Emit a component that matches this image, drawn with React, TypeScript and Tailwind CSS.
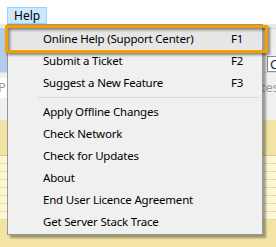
import React from "react";

const font = { fontFamily: '"Noto Sans", "Segoe UI", sans-serif' };

type Item = { label: string; key?: string };

const top: Item[] = [
  { label: "Online Help (Support Center)", key: "F1" },
  { label: "Submit a Ticket", key: "F2" },
  { label: "Suggest a New Feature", key: "F3" },
];

const bottom: Item[] = [
  { label: "Apply Offline Changes" },
  { label: "Check Network" },
  { label: "Check for Updates" },
  { label: "About" },
  { label: "End User Licence Agreement" },
  { label: "Get Server Stack Trace" },
];

function MenuRow({ item, active }: { item: Item; active?: boolean }) {
  return (
    <div
      className={
        "flex items-center h-[22px] mx-[1px] pl-[34px] pt-[1px] text-[11.5px] tracking-[-0.2px] text-black " +
        (active ? "bg-[#e6e6e6]" : "")
      }
    >
      <span className="w-[188px] whitespace-nowrap">{item.label}</span>
      <span className="whitespace-nowrap">{item.key}</span>
    </div>
  );
}

function Backdrop() {
  return (
    <div className="flex flex-col h-full">
      <div className="h-[24px] bg-white flex items-start pl-[7px] pt-[7px]">
        <div className="h-[17px] px-[6px] flex items-center bg-[#cce8ff] border border-[#99d1ff] text-[12px] text-black">
          Help
        </div>
      </div>
      <div className="h-[4px] bg-[#e9e9e9]" />
      <div className="h-[44px] flex">
        <div className="w-[8px] bg-[#b3cdee]" />
        <div className="flex-1 bg-[#f0f0f0] flex justify-end items-start pt-[27px] border-t border-[#d5d5d5]">
          <div className="w-[9px] h-[16px] bg-white border-l border-t border-b border-[#8a8a8a] pl-[2px] text-[13px] leading-[15px] text-[#1c2a4a] overflow-hidden">
            C
          </div>
        </div>
      </div>
      <div className="h-[48px] bg-[#f0f0f0] border-t border-[#dcdcdc] flex justify-between items-start pt-[5px] text-[13px] text-[#9a9a9a]">
        <span className="-ml-[2px] bg-white pr-[1px]">P</span>
        <span className="-mr-[3px]">tes</span>
      </div>
      <div className="flex-1 bg-[#f3e4a5] flex flex-col">
        <div className="h-[36px] border-b border-[#e2c988]" />
        {[0, 1, 2, 3, 4, 5, 6, 7].map((i) => (
          <div key={i} className="h-[8px] bg-[#fcf8d6] border-b border-[#e8d9a2]" />
        ))}
      </div>
    </div>
  );
}

export default function App() {
  return (
    <div className="relative w-[276px] h-[247px] overflow-hidden bg-white" style={font}>
      <Backdrop />
      <div className="absolute left-[7px] top-[24px] w-[256px] h-[211px] bg-[#f0f0f0] border border-[#979797] py-[2px] shadow-[3px_3px_2px_rgba(0,0,0,0.35)]">
        {top.map((item, i) => (
          <MenuRow key={item.label} item={item} active={i === 0} />
        ))}
        <div className="h-[7px] flex items-center pl-[30px] pr-[3px] pt-[1px]">
          <div className="flex-1 h-[1px] bg-[#d7d7d7]" />
        </div>
        {bottom.map((item) => (
          <MenuRow key={item.label} item={item} />
        ))}
      </div>
      <div className="absolute left-[5px] top-[25px] w-[263px] h-[28px] border-[3px] border-[#f6a000] rounded-[1px] shadow-[2px_2px_3px_rgba(0,0,0,0.45),inset_2px_2px_3px_rgba(0,0,0,0.45)]" />
    </div>
  );
}
